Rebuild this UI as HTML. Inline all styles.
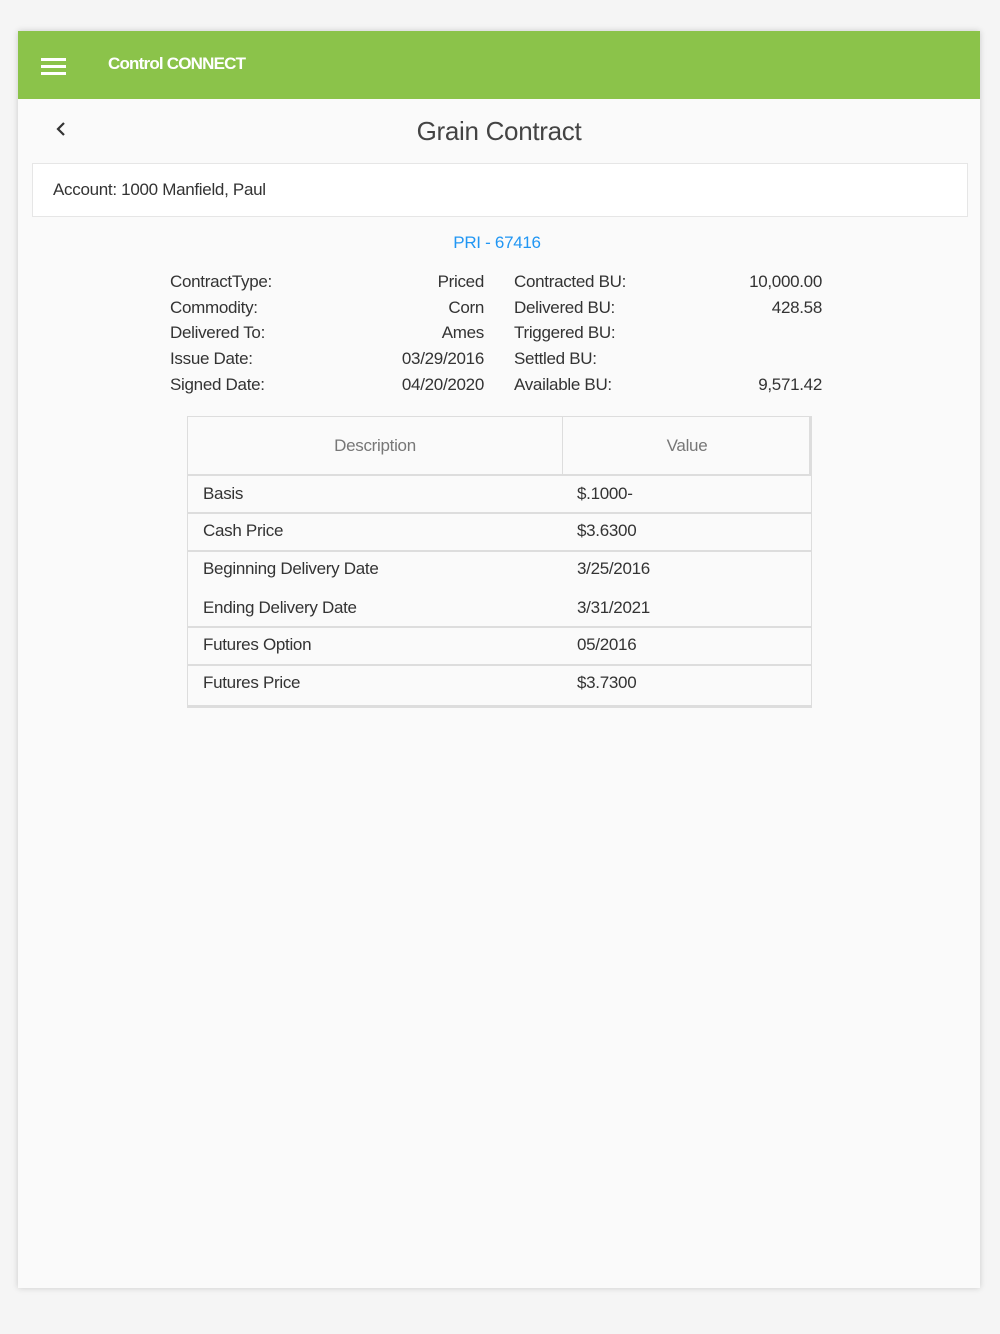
<!DOCTYPE html>
<html><head><style>
body{margin:0;width:1000px;height:1334px;background:#f5f5f5;font-family:"Liberation Sans",sans-serif;position:relative;overflow:hidden;color:#333}
.frame{position:absolute;left:18px;top:31px;width:962px;height:1257px;background:#fafafa;box-shadow:0 0 6px rgba(0,0,0,.18)}
.hdr{position:absolute;left:0;top:0;width:962px;height:68px;background:#8bc34a}
.ham{position:absolute;left:23px;top:27px;width:25px}
.ham div{height:3px;background:#fff;margin-bottom:4px}
.brand{position:absolute;left:90px;top:23px;color:#fff;font-size:17px;font-weight:bold;letter-spacing:-0.8px}
.t{position:absolute;white-space:nowrap;font-size:17px;letter-spacing:-0.3px}
.acct{position:absolute;left:14px;top:132px;width:934px;height:52px;background:#fff;border:1px solid #e6e6e6}
.tbl{position:absolute;left:169px;top:385px;width:623px;height:288px;border:1px solid #ddd;border-bottom:3px solid #ddd;background:#fafafa}
.r{position:absolute;left:0;width:623px;border-top:2px solid #ddd}
</style></head><body>
<div class="frame">
<div class="hdr"><div class="ham"><div></div><div></div><div></div></div><div class="brand">Control CONNECT</div></div>
<svg style="position:absolute;left:36px;top:89px" width="14" height="18"><path d="M10 3 L4 9 L10 15" stroke="#333" stroke-width="2.2" fill="none"/></svg>
<div class="t" style="left:0;width:962px;text-align:center;top:85px;font-size:26px;color:#444">Grain Contract</div>
<div class="acct"><div class="t" style="left:20px;top:16px">Account: 1000 Manfield, Paul</div></div>
<div class="t" style="left:0;width:958px;text-align:center;top:202px;color:#2196f3">PRI - 67416</div>
<div class="t" style="left:152px;top:238px;line-height:25.7px">ContractType:<br>Commodity:<br>Delivered To:<br>Issue Date:<br>Signed Date:</div>
<div class="t" style="left:300px;width:166px;text-align:right;top:238px;line-height:25.7px">Priced<br>Corn<br>Ames<br>03/29/2016<br>04/20/2020</div>
<div class="t" style="left:496px;top:238px;line-height:25.7px">Contracted BU:<br>Delivered BU:<br>Triggered BU:<br>Settled BU:<br>Available BU:</div>
<div class="t" style="left:654px;width:150px;text-align:right;top:238px;line-height:25.7px">10,000.00<br>428.58<br><br><br>9,571.42</div>
<div class="tbl">
<div style="position:absolute;left:374px;top:0;width:1px;height:57px;background:#ddd"></div>
<div style="position:absolute;right:0;top:0;width:2px;height:57px;background:#ddd"></div>
<div class="t" style="left:0;width:374px;text-align:center;top:19px;color:#777">Description</div>
<div class="t" style="left:375px;width:248px;text-align:center;top:19px;color:#777">Value</div>
<div class="r" style="top:57px;height:37px"><div class="t" style="left:15px;top:8px">Basis</div><div class="t" style="left:389px;top:8px">$.1000-</div></div>
<div class="r" style="top:95px;height:37px"><div class="t" style="left:15px;top:7px">Cash Price</div><div class="t" style="left:389px;top:7px">$3.6300</div></div>
<div class="r" style="top:133px;height:75px"><div class="t" style="left:15px;top:7px">Beginning Delivery Date</div><div class="t" style="left:389px;top:7px">3/25/2016</div><div class="t" style="left:15px;top:46px">Ending Delivery Date</div><div class="t" style="left:389px;top:46px">3/31/2021</div></div>
<div class="r" style="top:209px;height:37px"><div class="t" style="left:15px;top:7px">Futures Option</div><div class="t" style="left:389px;top:7px">05/2016</div></div>
<div class="r" style="top:247px;height:37px"><div class="t" style="left:15px;top:7px">Futures Price</div><div class="t" style="left:389px;top:7px">$3.7300</div></div>
</div>
</div>
</body></html>
